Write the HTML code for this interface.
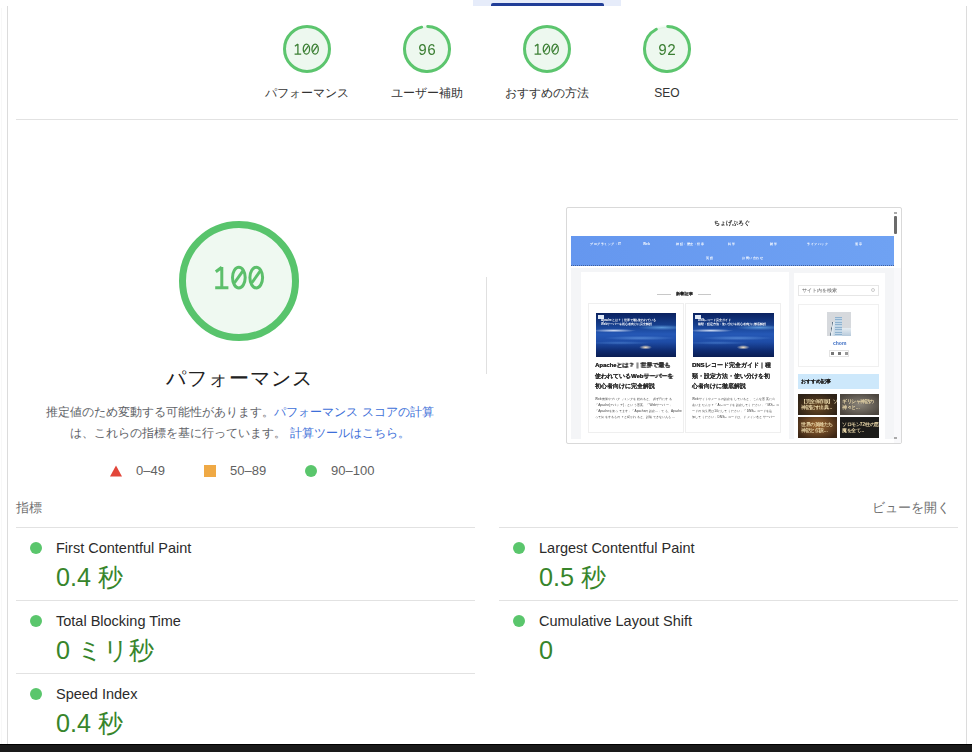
<!DOCTYPE html>
<html><head><meta charset="utf-8">
<style>
*{box-sizing:border-box;margin:0;padding:0}
html,body{width:972px;height:752px;overflow:hidden;background:#fff;font-family:"Liberation Sans",sans-serif;color:#202124}
.abs{position:absolute}
.vl{position:absolute;width:1px;background:#dcdcdc}
.hl{position:absolute;height:1px;background:#e2e2e2}
.tabbg{left:473px;top:0;width:148px;height:6px;background:#e6ecfa}
.tabbar{left:491px;top:3px;width:113px;height:3px;background:#213e98;border-radius:2px 2px 0 0}
.g{position:absolute;width:48px;height:48px}
.g svg.ring{position:absolute;left:0;top:0;width:48px;height:48px}
.gp{position:absolute;left:0;top:16.8px;width:48px;height:20px;line-height:20px;text-align:center;font-family:"Liberation Mono",monospace;font-size:15px;color:#3b7f33;transform:scaleY(1.07);transform-origin:50% 9px}
.gl{position:absolute;width:120px;text-align:center;font-size:12px;color:#333;line-height:16px}
.dot{position:absolute;width:12px;height:12px;border-radius:50%;background:#5ac66c}
.ml{position:absolute;font-size:14.5px;color:#2b2b2b;line-height:16px;white-space:nowrap}
.mv{position:absolute;font-size:25.2px;color:#37852b;line-height:28px;white-space:nowrap}
.nav{height:8px;font-size:6.6px;line-height:12px;font-weight:bold;color:#fff;transform:scale(0.5);transform-origin:0 0;white-space:nowrap;opacity:.95}
.ttl{font-size:11.9px;line-height:20.8px;font-weight:bold;color:#2a2a2a;text-shadow:0.4px 0 0 #2a2a2a;transform:scale(0.5);transform-origin:0 0;white-space:nowrap}
.exc{font-size:9px;line-height:17.2px;color:#3c3c3c;transform:scale(0.355);transform-origin:0 0;white-space:nowrap}
.gtx{font-size:9px;line-height:11px;font-weight:bold;color:#e8d6a8;transform:scale(0.5);transform-origin:0 0;white-space:nowrap}
.img1{overflow:hidden;background:radial-gradient(ellipse 8% 5% at 62% 78%,rgba(255,235,200,.95),rgba(255,235,200,0)),radial-gradient(ellipse 28% 4% at 22% 40%,rgba(235,242,255,.85),rgba(235,242,255,0)),radial-gradient(ellipse 30% 6% at 82% 33%,rgba(130,200,255,.6),rgba(130,200,255,0)),radial-gradient(ellipse 45% 5% at 55% 57%,rgba(140,195,255,.45),rgba(140,195,255,0)),radial-gradient(ellipse 40% 4% at 30% 68%,rgba(120,180,250,.35),rgba(120,180,250,0)),linear-gradient(180deg,#0b2260 0%,#163f8e 28%,#2558b6 48%,#1e4ca6 66%,#0f2c72 85%,#0a1d52 100%)}
.img1 i{position:absolute;left:2px;top:2px;width:6px;height:4px;background:#dfe8f5}
.img1 b{position:absolute;left:5px;top:5px;font-size:9px;line-height:12px;color:#fff;transform:scale(0.33);transform-origin:0 0;white-space:nowrap;font-weight:bold}
</style></head>
<body>
<div class="vl" style="left:1px;top:8px;height:736px;background:#f8f8f8"></div>
<div class="vl" style="left:7px;top:6px;height:738px"></div>
<div class="vl" style="left:966px;top:6px;height:738px"></div>
<div class="abs tabbg"></div>
<div class="abs tabbar"></div>

<!-- small gauges -->
<svg width="0" height="0" style="position:absolute"><defs><g id="d100" fill="none" stroke="#3b7f33" stroke-linecap="butt"><path d="M6.8 0.9V21.8M6.8 1.2L0.8 5.8M0.2 21.8H13.4"/><ellipse cx="23.85" cy="11.6" rx="6.35" ry="10.3"/><path d="M19.3 17L28.3 4.4"/><ellipse cx="41.25" cy="11.6" rx="6.35" ry="10.3"/><path d="M36.7 17L45.7 4.4"/></g></defs></svg>
<div class="g" style="left:283px;top:25px"><svg class="ring" viewBox="0 0 120 120"><circle cx="60" cy="60" r="56" fill="#edf8ef" stroke="#5cc56e" stroke-opacity="0.06" stroke-width="7.5"/><circle cx="60" cy="60" r="56.25" fill="none" stroke="#5cc56e" stroke-width="7.5"/></svg><svg class="abs" style="left:11.4px;top:18.3px" width="25.5" height="12.2" viewBox="-1 -1 51 25" preserveAspectRatio="none"><use href="#d100" stroke-width="2.6"/></svg></div>
<div class="g" style="left:403px;top:25px"><svg class="ring" viewBox="0 0 120 120"><circle cx="60" cy="60" r="56" fill="#edf8ef" stroke="#5cc56e" stroke-opacity="0.06" stroke-width="7.5"/><circle cx="60" cy="60" r="56.25" fill="none" stroke="#5cc56e" stroke-width="7.5" stroke-linecap="round" stroke-dasharray="335.54 353.43" transform="rotate(-88.090 60 60)"/></svg><div class="gp">96</div></div>
<div class="g" style="left:523px;top:25px"><svg class="ring" viewBox="0 0 120 120"><circle cx="60" cy="60" r="56" fill="#edf8ef" stroke="#5cc56e" stroke-opacity="0.06" stroke-width="7.5"/><circle cx="60" cy="60" r="56.25" fill="none" stroke="#5cc56e" stroke-width="7.5"/></svg><svg class="abs" style="left:11.4px;top:18.3px" width="25.5" height="12.2" viewBox="-1 -1 51 25" preserveAspectRatio="none"><use href="#d100" stroke-width="2.6"/></svg></div>
<div class="g" style="left:643px;top:25px"><svg class="ring" viewBox="0 0 120 120"><circle cx="60" cy="60" r="56" fill="#edf8ef" stroke="#5cc56e" stroke-opacity="0.06" stroke-width="7.5"/><circle cx="60" cy="60" r="56.25" fill="none" stroke="#5cc56e" stroke-width="7.5" stroke-linecap="round" stroke-dasharray="321.40 353.43" transform="rotate(-88.090 60 60)"/></svg><div class="gp">92</div></div>
<div class="gl" style="left:247px;top:85px">パフォーマンス</div>
<div class="gl" style="left:367px;top:85px">ユーザー補助</div>
<div class="gl" style="left:487px;top:85px">おすすめの方法</div>
<div class="gl" style="left:607px;top:85px">SEO</div>

<div class="hl" style="left:16px;top:119px;width:942px"></div>

<!-- big gauge -->
<div class="abs" style="left:179px;top:221px;width:120px;height:120px">
<svg width="120" height="120" viewBox="0 0 120 120" style="position:absolute;left:0;top:0"><circle cx="60" cy="60" r="56.5" fill="#eff9f1" stroke="#58c46c" stroke-width="7"/></svg>
<svg class="abs" style="left:34.9px;top:43.6px" width="51" height="25" viewBox="-1 -1 51 25"><g fill="none" stroke="#5cbf6b" stroke-width="3"><path d="M6.8 0.9V21.8M6.8 1.2L0.8 5.8M0.2 21.8H13.4"/><ellipse cx="23.85" cy="11.6" rx="6.35" ry="10.3"/><path d="M19.3 17L28.3 4.4"/><ellipse cx="41.25" cy="11.6" rx="6.35" ry="10.3"/><path d="M36.7 17L45.7 4.4"/></g></svg>
</div>
<div class="abs" style="left:39px;top:364px;width:400px;text-align:center;font-size:20px;letter-spacing:0.9px;text-indent:0.9px;line-height:28px;color:#212121">パフォーマンス</div>
<div class="abs" style="left:20px;top:402px;width:440px;text-align:center;font-size:11.9px;line-height:20.5px;color:#5f6368">推定値のため変動する可能性があります。<span style="color:#3d6fd8">パフォーマンス スコアの計算</span><br>は、これらの指標を基に行っています。 <span style="color:#3d6fd8">計算ツールはこちら。</span></div>

<!-- legend -->
<svg class="abs" style="left:110px;top:465px" width="12" height="12" viewBox="0 0 12 12"><polygon points="6,0.5 12,11.5 0,11.5" fill="#e2463a"/></svg>
<div class="abs" style="left:136px;top:463px;font-size:13px;line-height:16px;color:#616161">0–49</div>
<div class="abs" style="left:204px;top:465px;width:12px;height:12px;background:#efa945"></div>
<div class="abs" style="left:230px;top:463px;font-size:13px;line-height:16px;color:#616161">50–89</div>
<div class="dot" style="left:305px;top:465px"></div>
<div class="abs" style="left:331px;top:463px;font-size:13px;line-height:16px;color:#616161">90–100</div>

<div class="vl" style="left:486px;top:277px;height:97px;background:#e0e0e0"></div>

<!-- thumbnail placeholder -->
<div class="abs" id="thumb" style="left:566px;top:207px;width:336px;height:237px;border:1px solid #d9d9d9;border-radius:2px;background:#fff;overflow:hidden">
<div class="abs" style="left:0;top:0;width:334px;height:235px;filter:blur(0.35px)">
 <!-- site title -->
 <div class="abs tiny" style="left:147px;top:11.2px;width:34px;height:8px;font-size:12.2px;line-height:16px;font-weight:bold;color:#222;transform:scale(0.5);transform-origin:0 0;white-space:nowrap">ちょげぷろぐ</div>
 <!-- nav -->
 <div class="abs" style="left:4px;top:28px;width:323px;height:30px;background:linear-gradient(90deg,#6597ef,#6fa2f3);border-bottom:1px dotted #3f5f9e"></div>
 <div class="abs nav" style="left:23px;top:33px">プログラミング・IT</div>
 <div class="abs nav" style="left:76px;top:33px">Web</div>
 <div class="abs nav" style="left:109px;top:33px">神話・歴史・伝承</div>
 <div class="abs nav" style="left:161px;top:33px">科学</div>
 <div class="abs nav" style="left:203px;top:33px">雑学</div>
 <div class="abs nav" style="left:240px;top:33px">ライフハック</div>
 <div class="abs nav" style="left:288px;top:33px">漢字</div>
 <div class="abs nav" style="left:139px;top:47px">英語</div>
 <div class="abs nav" style="left:175px;top:47px">お問い合わせ</div>
 <!-- gray bg -->
 <div class="abs" style="left:4px;top:60px;width:323px;height:171px;background:#f4f5f7"></div><div class="abs" style="left:327px;top:60px;width:7px;height:175px;background:#f9f9fb"></div>
 <!-- main column -->
 <div class="abs" style="left:14px;top:64px;width:208px;height:167px;background:#fff"></div>
 <div class="abs" style="left:90px;top:86px;width:14px;height:1px;background:#c8c8c8"></div>
 <div class="abs" style="left:131px;top:86px;width:13px;height:1px;background:#c8c8c8"></div>
 <div class="abs" style="left:109px;top:82px;height:8px;font-size:9.5px;line-height:16px;font-weight:bold;color:#1e1e1e;text-shadow:0.5px 0 0 #1e1e1e;transform:scale(0.42);transform-origin:0 0;white-space:nowrap">新着記事</div>
 <!-- card 1 -->
 <div class="abs" style="left:21px;top:95px;width:96px;height:130px;border:1px solid #efefef;background:#fff"></div>
 <div class="abs img1" style="left:29px;top:105px;width:80px;height:44px"><i></i><b>Apacheとは？｜世界で最も使われている<br>Webサーバーを初心者向けに完全解説</b></div>
 <div class="abs ttl" style="left:28px;top:152px">Apacheとは？｜世界で最も<br>使われているWebサーバーを<br>初心者向けに完全解説</div>
 <div class="abs exc" style="left:28px;top:188px">Web開発やプログラミングを始めると、必ず目にする<br>「Apache(アパッチ)」という言葉。「Webサーバー」<br>「Apacheを使ってます」「Apacheの設定…」でも、Apache<br>って何をするもの？と聞かれると、説明できない人も…</div>
 <!-- card 2 -->
 <div class="abs" style="left:118px;top:95px;width:96px;height:130px;border:1px solid #efefef;background:#fff"></div>
 <div class="abs img1" style="left:126px;top:105px;width:81px;height:44px"><i></i><b>DNSレコード完全ガイド<br>種類・設定方法・使い分けを初心者向けに徹底解説</b></div>
 <div class="abs ttl" style="left:125px;top:152px">DNSレコード完全ガイド｜種<br>類・設定方法・使い分けを初<br>心者向けに徹底解説</div>
 <div class="abs exc" style="left:125px;top:188px">Webサイトやメールの設定をしていると、こんな言葉に出<br>会いませんか？「Aレコードを設定してください」「MXレコ<br>ードの優先度は10にしてください」「DNSレコードを追<br>加してください」DNSレコードは、ドメイン名とサーバー</div>
 <!-- sidebar -->
 <div class="abs" style="left:227px;top:65px;width:91px;height:166px;background:#fff"></div>
 <div class="abs" style="left:231px;top:77px;width:81px;height:11px;border:1px solid #e6e6e6;background:#fff"></div>
 <div class="abs" style="left:235px;top:79px;height:8px;font-size:10px;line-height:14px;color:#666;transform:scale(0.5);transform-origin:0 0;white-space:nowrap">サイト内を検索</div>
 <div class="abs" style="left:304px;top:80px;width:4px;height:4px;border:1px solid #ccc;border-radius:50%"></div>
 <div class="abs" style="left:231px;top:96px;width:81px;height:63px;border:1px solid #f0f0f0;background:#fff"></div>
 <div class="abs" style="left:260px;top:104px;width:24px;height:24px;background:#d6d9dd;overflow:hidden"><div class="abs" style="left:8px;top:5px;width:7px;height:19px;background:repeating-linear-gradient(180deg,#8fb2cf 0,#8fb2cf 1px,#c4d8e8 1px,#c4d8e8 2.5px)"></div><div class="abs" style="left:3px;top:10px;width:5px;height:14px;background:linear-gradient(100deg,#d6d9dd 30%,#556c80 35%,#e8eef3 45%,#bcd0e0 100%)"></div><div class="abs" style="left:15px;top:16px;width:9px;height:8px;background:linear-gradient(180deg,#e6edf2,#b7cadb)"></div></div>
 <div class="abs" style="left:266px;top:132px;height:8px;font-size:10px;line-height:14px;font-weight:bold;color:#3d6ec4;transform:scale(0.5);transform-origin:0 0;white-space:nowrap">chom</div>
 <div class="abs" style="left:262px;top:142px;width:20px;height:7px;border:1px solid #e3e3e3;background:#fff"></div>
 <div class="abs" style="left:264px;top:144px;width:3px;height:3px;background:#777"></div>
 <div class="abs" style="left:271px;top:144px;width:3px;height:3px;background:#777"></div>
 <div class="abs" style="left:278px;top:144px;width:3px;height:3px;background:#999"></div>
 <div class="abs" style="left:231px;top:166px;width:81px;height:15px;background:#cde8fb"></div>
 <div class="abs" style="left:234px;top:170px;height:8px;font-size:10px;line-height:14px;font-weight:bold;color:#222;text-shadow:0.3px 0 0 #222;transform:scale(0.5);transform-origin:0 0;white-space:nowrap">おすすめ記事</div>
 <div class="abs" style="left:231px;top:186px;width:39px;height:21px;background:radial-gradient(ellipse at 50% 60%,#6b4a25,#2e2216 80%)"></div>
 <div class="abs" style="left:273px;top:186px;width:39px;height:21px;background:radial-gradient(ellipse at 50% 50%,#8a8479,#4c463f 85%)"></div>
 <div class="abs" style="left:231px;top:209px;width:39px;height:21px;background:radial-gradient(ellipse at 50% 40%,#a06a35,#3d2715 85%)"></div>
 <div class="abs" style="left:273px;top:209px;width:39px;height:21px;background:#1c1b19"></div>
 <div class="abs gtx" style="left:234px;top:191px">【完全保存版】ソ<br>神話記す出典…</div>
 <div class="abs gtx" style="left:275px;top:191px">ギリシャ神話の<br>神々と…</div>
 <div class="abs gtx" style="left:234px;top:214px">世界の英雄たち<br>神話と伝説…</div>
 <div class="abs gtx" style="left:275px;top:214px">ソロモン72柱の悪<br>魔を全て…</div>
 <!-- scrollbar -->
 <div class="abs" style="left:327px;top:8px;width:3px;height:18px;background:#6b6b6b;border-radius:1px"></div>
 <div class="abs" style="left:327px;top:4px;width:3px;height:2px;background:#aaa"></div>
 <div class="abs" style="left:327px;top:229px;width:3px;height:2px;background:#aaa"></div>
</div>
</div>

<!-- metrics -->
<div class="abs" style="left:16px;top:500px;font-size:13px;line-height:16px;color:#6f6f6f">指標</div>
<div class="abs" style="left:850px;top:500px;width:100px;text-align:right;font-size:13px;line-height:16px;color:#6f6f6f">ビューを開く</div>

<div class="hl" style="left:16px;top:527px;width:459px"></div>
<div class="hl" style="left:499px;top:527px;width:459px"></div>
<div class="hl" style="left:16px;top:600px;width:459px"></div>
<div class="hl" style="left:499px;top:600px;width:459px"></div>
<div class="hl" style="left:16px;top:673px;width:459px"></div>

<div class="dot" style="left:30px;top:542px"></div>
<div class="ml" style="left:56px;top:540px">First Contentful Paint</div>
<div class="mv" style="left:56px;top:563px">0.4 秒</div>
<div class="dot" style="left:513px;top:542px"></div>
<div class="ml" style="left:539px;top:540px">Largest Contentful Paint</div>
<div class="mv" style="left:539px;top:563px">0.5 秒</div>

<div class="dot" style="left:30px;top:615px"></div>
<div class="ml" style="left:56px;top:613px">Total Blocking Time</div>
<div class="mv" style="left:56px;top:636px">0 ミリ秒</div>
<div class="dot" style="left:513px;top:615px"></div>
<div class="ml" style="left:539px;top:613px">Cumulative Layout Shift</div>
<div class="mv" style="left:539px;top:636px">0</div>

<div class="dot" style="left:30px;top:688px"></div>
<div class="ml" style="left:56px;top:686px">Speed Index</div>
<div class="mv" style="left:56px;top:709px">0.4 秒</div>

<div class="abs" style="left:0;top:744px;width:972px;height:8px;background:#1a1a1a;border-top:1px solid #000"></div>
</body></html>
